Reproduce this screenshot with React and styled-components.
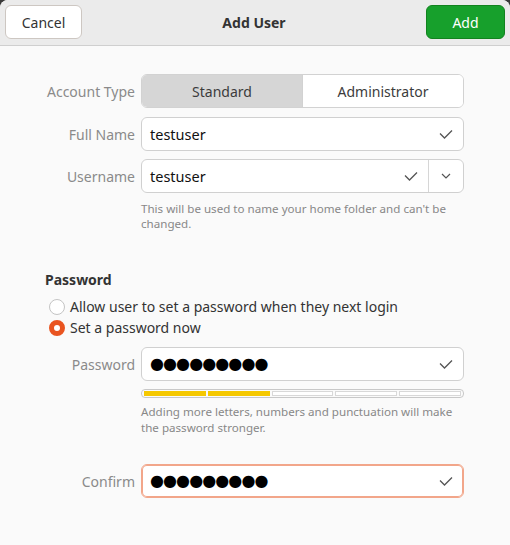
import React from 'react'
import styled, { createGlobalStyle } from 'styled-components'

const FONT = '"Noto Sans", "Open Sans", sans-serif'

const GlobalStyle = createGlobalStyle`
  html, body {
    margin: 0;
    padding: 0;
    background: #3a3a3a;
  }
  body {
    font-family: ${FONT};
    -webkit-font-smoothing: antialiased;
  }
`

const Window = styled.div`
  width: 510px;
  height: 545px;
  background: #fafafa;
  border-radius: 8px 8px 0 0;
  overflow: hidden;
  display: flex;
  flex-direction: column;
`

const HeaderBar = styled.div`
  height: 46px;
  box-sizing: border-box;
  background: #ebebeb;
  border-bottom: 1px solid #cfcfcf;
  display: flex;
  align-items: center;
  justify-content: space-between;
  padding: 0 5px 1px 5px;
`

const Title = styled.div`
  font-weight: 700;
  font-size: 14px;
  color: #333;
`

const HeaderButton = styled.button`
  height: 34px;
  box-sizing: border-box;
  border-radius: 6px;
  font-family: ${FONT};
  font-size: 14px;
  padding: 0;
  width: ${p => p.$w}px;
  background: ${p => (p.$primary ? '#17a02c' : '#ffffff')};
  color: ${p => (p.$primary ? '#ffffff' : '#333333')};
  border: 1px solid ${p => (p.$primary ? '#12831f' : '#cdc7c2')};
`

const Body = styled.div`
  padding: 28px 46px 0 45px;
  display: flex;
  flex-direction: column;
`

const FormGrid = styled.div`
  display: grid;
  grid-template-columns: 90px 1fr;
  column-gap: 6px;
  row-gap: ${p => p.$gap || 9}px;
  align-items: center;
  margin-top: ${p => p.$top || 0}px;
`

const Label = styled.div`
  font-size: 14px;
  color: #8a8a8a;
  text-align: right;
  white-space: nowrap;
`

const Toggle = styled.div`
  display: flex;
  height: 34px;
  box-sizing: border-box;
  border: 1px solid #d2d2d2;
  border-radius: 6px;
  overflow: hidden;
  background: #fff;
  margin-bottom: 1px;
`

const ToggleItem = styled.div`
  flex: 1;
  display: flex;
  align-items: center;
  justify-content: center;
  font-size: 14px;
  color: #3c3c3c;
  background: ${p => (p.$active ? '#d6d6d6' : '#ffffff')};
  & + & {
    border-left: 1px solid #d2d2d2;
  }
`

const Entry = styled.div`
  height: 34px;
  box-sizing: border-box;
  border: 1px solid ${p => (p.$focus ? '#f2a68a' : '#d0d0d0')};
  box-shadow: ${p => (p.$focus ? 'inset 0 0 0 1px #f2a68a' : 'none')};
  border-radius: 6px;
  background: #fff;
  display: flex;
  align-items: center;
`

const EntryText = styled.div`
  flex: 1;
  padding-left: 8px;
  font-size: 14.5px;
  color: #111;
`

const Dots = styled.div`
  flex: 1;
  padding-left: 8px;
  font-family: "DejaVu Sans", sans-serif;
  font-size: 16px;
  letter-spacing: -0.9px;
  color: #000;
  line-height: 1;
`

const IconSlot = styled.div`
  width: ${p => p.$w || 34}px;
  height: 100%;
  display: flex;
  align-items: center;
  justify-content: center;
  border-left: ${p => (p.$sep ? '1px solid #d6d6d6' : 'none')};
`

const Hint = styled.div`
  font-size: 11.6px;
  line-height: ${p => p.$lh || 15}px;
  color: #888888;
  margin: ${p => p.$top || 8}px 0 0 96px;
  max-width: 322px;
`

const SectionTitle = styled.div`
  font-weight: 700;
  font-size: 14px;
  color: #333;
  margin-top: 39px;
`

const Radios = styled.div`
  display: flex;
  flex-direction: column;
  gap: 2px;
  margin: 8px 0 10px 4px;
`

const RadioRow = styled.label`
  display: flex;
  align-items: center;
  gap: 5px;
  font-size: 14px;
  color: #333;
`

const RadioDot = styled.span`
  width: 16px;
  height: 16px;
  box-sizing: border-box;
  border-radius: 50%;
  border: ${p => (p.$on ? '5px solid #e95420' : '1px solid #c4c4c4')};
  background: #fff;
`

const LevelBar = styled.div`
  height: 9px;
  box-sizing: border-box;
  border: 1px solid #c8c8c8;
  border-radius: 4px;
  padding: 1px 2px;
  display: flex;
  gap: 2px;
  margin-top: -1px;
`

const LevelBlock = styled.div`
  flex: 1;
  box-sizing: border-box;
  background: ${p => (p.$on ? '#f5c800' : '#ffffff')};
  border: 1px solid ${p => (p.$on ? '#f5c800' : '#d8d8d8')};
`

const Check = () => (
  <svg width="14" height="10" viewBox="0 0 14 10">
    <path d="M1 4.5 L5.5 9 L13 1.5" fill="none" stroke="#555" strokeWidth="1.3" />
  </svg>
)

const Chevron = () => (
  <svg width="10" height="6" viewBox="0 0 10 6">
    <path d="M1 1 L5 5 L9 1" fill="none" stroke="#555" strokeWidth="1.2" />
  </svg>
)

const DOTS = '●●●●●●●●●'

export default function App() {
  return (
    <>
      <GlobalStyle />
      <Window>
        <HeaderBar>
          <HeaderButton $w={77}>Cancel</HeaderButton>
          <Title>Add User</Title>
          <HeaderButton $w={79} $primary>Add</HeaderButton>
        </HeaderBar>
        <Body>
          <FormGrid $gap={8}>
            <Label>Account Type</Label>
            <Toggle>
              <ToggleItem $active>Standard</ToggleItem>
              <ToggleItem>Administrator</ToggleItem>
            </Toggle>
            <Label>Full Name</Label>
            <Entry>
              <EntryText>testuser</EntryText>
              <IconSlot><Check /></IconSlot>
            </Entry>
            <Label>Username</Label>
            <Entry>
              <EntryText>testuser</EntryText>
              <IconSlot><Check /></IconSlot>
              <IconSlot $sep $w={34}><Chevron /></IconSlot>
            </Entry>
          </FormGrid>
          <Hint>This will be used to name your home folder and can't be changed.</Hint>

          <SectionTitle>Password</SectionTitle>
          <Radios>
            <RadioRow><RadioDot />Allow user to set a password when they next login</RadioRow>
            <RadioRow><RadioDot $on />Set a password now</RadioRow>
          </Radios>

          <FormGrid>
            <Label>Password</Label>
            <Entry>
              <Dots>{DOTS}</Dots>
              <IconSlot><Check /></IconSlot>
            </Entry>
            <span />
            <LevelBar>
              {[1, 1, 0, 0, 0].map((on, i) => (
                <LevelBlock key={i} $on={!!on} />
              ))}
            </LevelBar>
          </FormGrid>
          <Hint $top={6} $lh={16}>
            Adding more letters, numbers and punctuation will make the password stronger.
          </Hint>
          <FormGrid $top={28}>
            <Label>Confirm</Label>
            <Entry $focus>
              <Dots>{DOTS}</Dots>
              <IconSlot><Check /></IconSlot>
            </Entry>
          </FormGrid>
        </Body>
      </Window>
    </>
  )
}
